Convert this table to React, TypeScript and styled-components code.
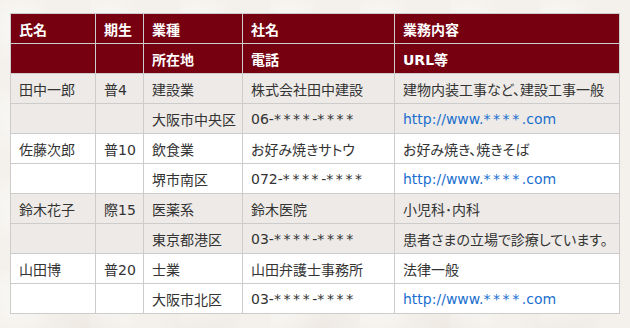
import { createGlobalStyle, styled } from "styled-components";

const GlobalStyle = createGlobalStyle`
  html, body {
    margin: 0;
    padding: 0;
  }
  body {
    background-color: #f4f1ec;
    background-image:
      radial-gradient(circle at 20% 30%, rgba(255, 255, 255, 0.5) 0, transparent 40px),
      radial-gradient(circle at 70% 80%, rgba(230, 224, 216, 0.5) 0, transparent 50px);
    background-size: 90px 90px, 120px 120px;
    font-family: "DejaVu Sans", "Noto Sans CJK JP", sans-serif;
    color: #333;
  }
`;

const Page = styled.div`
  padding: 13px 10px 15px;
`;

const Table = styled.table`
  width: 610px;
  table-layout: fixed;
  border-collapse: collapse;
  border: 1px solid #cccccc;
`;

const HeadCell = styled.th`
  height: 29px;
  padding: 0 8px;
  background-color: #76000f;
  border: 1px solid #cccccc;
  color: #ffffff;
  font-size: 14px;
  font-weight: bold;
  text-align: left;
  white-space: nowrap;
`;

const Row = styled.tr<{ $shaded: boolean }>`
  background-color: ${(props) => (props.$shaded ? "#edeae7" : "#ffffff")};
`;

const Cell = styled.td`
  height: 29px;
  padding: 0 8px;
  border: 1px solid #cccccc;
  font-size: 14px;
  font-feature-settings: "palt";
  white-space: nowrap;
  vertical-align: middle;
`;

const Link = styled.a`
  color: #1a6fce;
  text-decoration: none;
`;

// masked digits are drawn wider apart in the original font
const Stars = styled.span`
  letter-spacing: 2.6px;
`;

function Masked({ text }: { text: string }) {
  return (
    <>
      {text.split(/(\*+)/).map((part, i) =>
        part.startsWith("*") ? <Stars key={i}>{part}</Stars> : part
      )}
    </>
  );
}

interface IMember {
  name: string;
  term: string;
  industry: string;
  company: string;
  business: string;
  area: string;
  phone: string;
  url?: string;
  note?: string;
}

const members: IMember[] = [
  {
    name: "田中一郎",
    term: "普4",
    industry: "建設業",
    company: "株式会社田中建設",
    business: "建物内装工事など、建設工事一般",
    area: "大阪市中央区",
    phone: "06-****-****",
    url: "http://www.****.com",
  },
  {
    name: "佐藤次郎",
    term: "普10",
    industry: "飲食業",
    company: "お好み焼きサトウ",
    business: "お好み焼き、焼きそば",
    area: "堺市南区",
    phone: "072-****-****",
    url: "http://www.****.com",
  },
  {
    name: "鈴木花子",
    term: "際15",
    industry: "医薬系",
    company: "鈴木医院",
    business: "小児科･内科",
    area: "東京都港区",
    phone: "03-****-****",
    note: "患者さまの立場で診療しています。",
  },
  {
    name: "山田博",
    term: "普20",
    industry: "士業",
    company: "山田弁護士事務所",
    business: "法律一般",
    area: "大阪市北区",
    phone: "03-****-****",
    url: "http://www.****.com",
  },
];

export default function App() {
  return (
    <Page>
      <GlobalStyle />
      <Table>
        <colgroup>
          <col style={{ width: 85 }} />
          <col style={{ width: 48 }} />
          <col style={{ width: 99 }} />
          <col style={{ width: 152 }} />
          <col />
        </colgroup>
        <thead>
          <tr>
            <HeadCell>氏名</HeadCell>
            <HeadCell>期生</HeadCell>
            <HeadCell>業種</HeadCell>
            <HeadCell>社名</HeadCell>
            <HeadCell>業務内容</HeadCell>
          </tr>
          <tr>
            <HeadCell />
            <HeadCell />
            <HeadCell>所在地</HeadCell>
            <HeadCell>電話</HeadCell>
            <HeadCell>URL等</HeadCell>
          </tr>
        </thead>
        <tbody>
          {members.map((m, index) => [
            <Row key={`${index}-a`} $shaded={index % 2 === 0}>
              <Cell>{m.name}</Cell>
              <Cell>{m.term}</Cell>
              <Cell>{m.industry}</Cell>
              <Cell>{m.company}</Cell>
              <Cell>{m.business}</Cell>
            </Row>,
            <Row key={`${index}-b`} $shaded={index % 2 === 0}>
              <Cell />
              <Cell />
              <Cell>{m.area}</Cell>
              <Cell>
                <Masked text={m.phone} />
              </Cell>
              <Cell>
                {m.url ? (
                  <Link href="#">
                    <Masked text={m.url} />
                  </Link>
                ) : (
                  m.note
                )}
              </Cell>
            </Row>,
          ])}
        </tbody>
      </Table>
    </Page>
  );
}
